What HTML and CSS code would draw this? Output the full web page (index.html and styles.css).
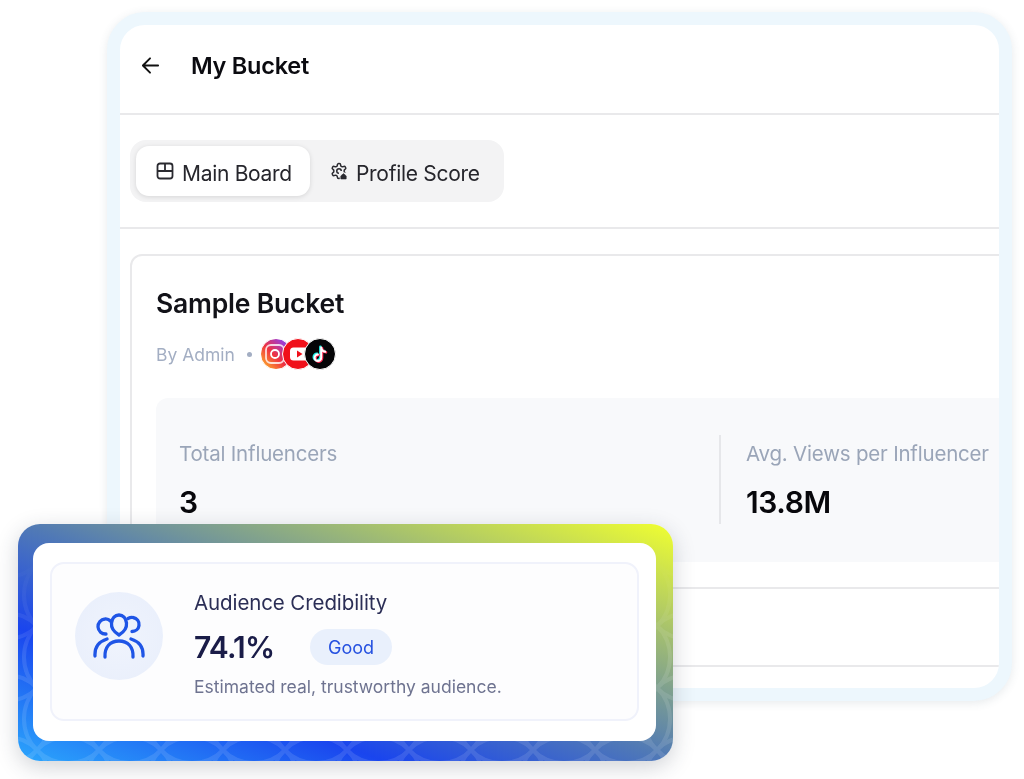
FILE: index.html
```html
<!DOCTYPE html>
<html>

<head>
    <title>My Bucket</title>
    <link rel="stylesheet" href="styles.css">
</head>

<body>
    <div class="page">
        <div class="frame">
            <div class="topbar">
                <svg class="back-icon" viewBox="0 0 20 20" fill="none" stroke="#111" stroke-width="2" stroke-linecap="round" stroke-linejoin="round">
                    <path d="M18 10H2.500M9.500 2.500 2 10l7.500 7.500" />
                </svg>
                <h1 class="page-title">My Bucket</h1>
            </div>

            <div class="tabs-row">
                <div class="tabs">
                    <div class="tab tab-active">
                        <svg class="tab-icon" viewBox="0 0 18 18" fill="none" stroke="#2a2a30" stroke-width="1.800" stroke-linejoin="round">
                            <rect x="1.500" y="1.500" width="15" height="15" rx="2.500" />
                            <path d="M1.500 9h15M9 1.500V9" />
                        </svg>
                        <span class="tab-label">Main Board</span>
                    </div>
                    <div class="tab">
                        <svg class="tab-icon" viewBox="0 0 24 24" fill="none" stroke="#2a2a30" stroke-width="2" stroke-linejoin="round">
                            <path d="M12.220 2h-.44a2 2 0 0 0-2 2v.18a2 2 0 0 1-1 1.730l-.43.25a2 2 0 0 1-2 0l-.15-.08a2 2 0 0 0-2.730.73l-.22.38a2 2 0 0 0 .73 2.730l.15.1a2 2 0 0 1 1 1.720v.51a2 2 0 0 1-1 1.740l-.15.09a2 2 0 0 0-.73 2.730l.22.38a2 2 0 0 0 2.730.73l.15-.08a2 2 0 0 1 2 0l.43.25a2 2 0 0 1 1 1.730V20a2 2 0 0 0 2 2h.44a2 2 0 0 0 2-2v-.18a2 2 0 0 1 1-1.730l.43-.25a2 2 0 0 1 2 0l.15.08a2 2 0 0 0 2.730-.73l.22-.39a2 2 0 0 0-.73-2.730l-.15-.08a2 2 0 0 1-1-1.740v-.5a2 2 0 0 1 1-1.740l.15-.09a2 2 0 0 0 .73-2.730l-.22-.38a2 2 0 0 0-2.730-.73l-.15.08a2 2 0 0 1-2 0l-.43-.25a2 2 0 0 1-1-1.730V4a2 2 0 0 0-2-2z" />
                            <path d="M15 12a3 3 0 1 0-3 3" />
                            <path d="M13 14h11v10H13z" fill="#f3f3f4" stroke="none" />
                            <path d="M14.500 18.500 18 15.500l3.500 3v4h-7z" fill="#2a2a30" stroke-width="1" />
                        </svg>
                        <span class="tab-label">Profile Score</span>
                    </div>
                </div>
            </div>

            <div class="card">
                <h2 class="card-title">Sample Bucket</h2>
                <div class="card-meta">
                    <span>By Admin</span>
                    <span class="meta-dot"></span>
                    <div class="socials">
                        <span class="social social-ig">
                            <svg viewBox="0 0 30 30" fill="none" stroke="#fff" stroke-width="1.800">
                                <rect x="5" y="6" width="18" height="18" rx="5" opacity="0.8" />
                                <circle cx="14" cy="15" r="4" />
                            </svg>
                        </span>
                        <span class="social social-yt">
                            <svg viewBox="0 0 30 30">
                                <rect x="7" y="8.500" width="22" height="13" rx="3.500" fill="#fff" />
                                <path d="M14 11.500v7l5.500-3.500z" fill="#f0101a" />
                            </svg>
                        </span>
                        <span class="social social-tt">
                            <svg viewBox="0 0 30 30" fill="none" stroke-width="2.600" stroke-linecap="round">
                                <path d="M16.200 8.500v10.200a3.300 3.300 0 1 1-3.300-3.300M16.200 8.800c.4 2.400 1.900 3.700 4 3.900" stroke="#25f4ee" transform="translate(-.8 -.6)" />
                                <path d="M16.200 8.500v10.200a3.300 3.300 0 1 1-3.300-3.300M16.200 8.800c.4 2.400 1.900 3.700 4 3.900" stroke="#fe2c55" transform="translate(.8 .6)" />
                                <path d="M16.200 8.500v10.200a3.300 3.300 0 1 1-3.300-3.300M16.200 8.800c.4 2.400 1.900 3.700 4 3.900" stroke="#fff" stroke-width="2" />
                            </svg>
                        </span>
                    </div>
                </div>

                <div class="stats">
                    <div class="stat stat-first">
                        <div class="stat-label">Total Influencers</div>
                        <div class="stat-value">3</div>
                    </div>
                    <div class="stat stat-second">
                        <div class="stat-label">Avg. Views per Influencer</div>
                        <div class="stat-value">13.8M</div>
                    </div>
                </div>

                <div class="card-row"></div>
                <div class="card-row card-row-short"></div>
            </div>
        </div>

        <div class="credibility">
            <svg class="pattern" width="100%" height="100%">
                <defs>
                    <pattern id="lattice" width="62" height="62" patternUnits="userSpaceOnUse" x="-12" y="9">
                        <g fill="none" stroke="#fff" stroke-width="4">
                            <circle cx="0" cy="0" r="44" />
                            <circle cx="62" cy="0" r="44" />
                            <circle cx="0" cy="62" r="44" />
                            <circle cx="62" cy="62" r="44" />
                        </g>
                    </pattern>
                </defs>
                <rect width="100%" height="100%" fill="url(#lattice)" />
            </svg>
            <div class="cred-inner">
                <div class="cred-box">
                    <div class="cred-circle">
                        <svg class="people-icon" viewBox="0 0 52 46" fill="none" stroke="#1f55e6" stroke-width="3.300" stroke-linecap="round" stroke-linejoin="round">
                            <path d="M13 21a7.500 7.500 0 0 1-1-15c2-.2 4 .5 5.500 2" />
                            <path d="M35 5.500c1.800-1 3.500-1.300 5-1 4 .7 6.500 4 6 8-.4 3.600-3.500 6-7 6" />
                            <path d="M26 22c-5-3-8-7-7.500-12C19 5 22 2 26 2s7 3 7.500 8c.5 5-2.500 9-7.500 12z" />
                            <path d="M2 43c-.5-8 2.500-14 12-17" />
                            <path d="M50 43c.5-8-2.500-14-12-17" />
                            <path d="M12 44c-.5-10 5-16 14-16s14.500 6 14 16" />
                        </svg>
                    </div>
                    <div class="cred-text">
                        <div class="cred-title">Audience Credibility</div>
                        <div class="cred-score">
                            <span class="cred-value">74.1%</span>
                            <span class="cred-pill">Good</span>
                        </div>
                        <div class="cred-note">Estimated real, trustworthy audience.</div>
                    </div>
                </div>
            </div>
        </div>
    </div>
</body>

</html>
```

FILE: styles.css
```css
* {
    box-sizing: border-box;
}

body {
    margin: 0;
    overflow: hidden;
    background: #fff;
    font-family: "Inter", "Liberation Sans", sans-serif;
}

.page {
    position: relative;
    width: 1024px;
    height: 779px;
    padding: 12px 12px 0 107px;
    filter: blur(0.4px);
}

.frame {
    height: 689px;
    border: 13px solid #edf7fd;
    border-radius: 38px;
    background: #fff;
    overflow: hidden;
    box-shadow: 0 2px 10px rgba(60, 80, 100, 0.12);
}

.topbar {
    display: flex;
    align-items: center;
    height: 90px;
    padding: 0 0 8px 21px;
    border-bottom: 2px solid #e9e9eb;
}

.back-icon {
    width: 19px;
    height: 19px;
}

.page-title {
    margin: 0 0 0 31px;
    font-size: 23.500px;
    font-weight: 600;
    letter-spacing: -0.25px;
    color: #0b0b10;
}

.tabs-row {
    height: 114px;
    padding: 25px 0 0 10px;
    border-bottom: 2px solid #e9e9eb;
}

.tabs {
    display: inline-flex;
    width: 374px;
    height: 62px;
    padding: 6px;
    border-radius: 16px;
    background: #f3f3f4;
}

.tab {
    display: flex;
    align-items: center;
    flex: none;
    gap: 8px;
    height: 50px;
    padding: 0 20px;
    font-size: 21px;
    white-space: nowrap;
    color: #26262c;
    letter-spacing: -0.3px;
}

.tab-label {
    margin-top: 4px;
}

.tab-active {
    width: 174px;
    border-radius: 13px;
    background: #fff;
    box-shadow: 0 1px 5px rgba(0, 0, 0, 0.12);
}

.tab-icon {
    width: 18px;
    height: 18px;
    flex: none;
}

.card {
    margin: 25px -40px 0 10px;
    padding: 30px 0 60px 24px;
    border: 2px solid #e9e9eb;
    border-radius: 12px;
}

.card-title {
    margin: -1px 0 1px;
    font-size: 26.500px;
    line-height: 36px;
    font-weight: 600;
    letter-spacing: -0.2px;
    color: #121218;
}

.card-meta {
    display: flex;
    align-items: center;
    margin-top: 17px;
    height: 32px;
    font-size: 17.500px;
    color: #a3aec3;
}

.meta-dot {
    width: 5px;
    height: 5px;
    margin: 0 8px 0 12px;
    border-radius: 50%;
    background: #a3aec3;
}

.socials {
    display: flex;
}

.social {
    width: 32px;
    height: 32px;
    border-radius: 50%;
    border: 1px solid #fff;
    overflow: hidden;
}

.social + .social {
    margin-left: -10px;
}

.social svg {
    display: block;
    width: 100%;
    height: 100%;
}

.social-ig {
    background: linear-gradient(45deg, #fdb32a 5%, #f0333f 45%, #a03ccf 80%, #6b4fd8);
}

.social-yt {
    background: #f0101a;
}

.social-tt {
    background: #050507;
}

.stats {
    display: flex;
    height: 164px;
    margin-top: 28px;
    padding: 37px 0 0 23px;
    border-radius: 12px 0 0 12px;
    background: #f8f9fb;
}

.stat-first {
    width: 542px;
    height: 89px;
    border-right: 2px solid #e6e7ea;
}

.stat-second {
    padding-left: 25px;
}

.stat-label {
    padding-top: 1px;
    font-size: 20.500px;
    letter-spacing: -0.2px;
    line-height: 36px;
    color: #9aa5b8;
}

.stat-value {
    margin-top: 12px;
    font-size: 30px;
    line-height: 36px;
    font-weight: 600;
    letter-spacing: -0.4px;
    color: #08080c;
}

.card-row {
    height: 27px;
    border-bottom: 2px solid #e9e9eb;
    margin-left: -24px;
}

.card-row-short {
    height: 78px;
}

/* floating credibility card */
.credibility {
    position: absolute;
    top: 524px;
    left: 18px;
    width: 655px;
    height: 237px;
    padding: 19px 17px 20px 15px;
    border-radius: 22px;
    overflow: hidden;
    background: linear-gradient(to top right, #2ba6fc 0%, #1a45ee 28%, #5079b6 50%, #f0ff30 100%);
    box-shadow: 0 6px 22px rgba(40, 50, 70, 0.22);
}

.pattern {
    position: absolute;
    top: 0;
    left: 0;
    opacity: 0.11;
    -webkit-mask-image: linear-gradient(to bottom, transparent 12%, #000 55%);
    mask-image: linear-gradient(to bottom, transparent 12%, #000 55%);
}

.cred-inner {
    position: relative;
    height: 100%;
    padding: 19px 17px 20px 17px;
    border-radius: 16px;
    background: #fff;
}

.cred-box {
    display: flex;
    align-items: flex-start;
    height: 100%;
    padding: 25px 0 0 23px;
    border: 2px solid #f0f2fb;
    border-radius: 14px;
    background: #fdfdfe;
}

.cred-circle {
    display: flex;
    align-items: center;
    justify-content: center;
    width: 88px;
    height: 88px;
    margin-top: 3px;
    flex: none;
    border-radius: 50%;
    background: radial-gradient(circle, #f0f4fd, #e8eefb);
}

.people-icon {
    width: 52px;
    height: 46px;
}

.cred-text {
    margin-left: 31px;
}

.cred-title {
    font-size: 20.500px;
    line-height: 28px;
    letter-spacing: -0.1px;
    color: #2b2e56;
}

.cred-score {
    display: flex;
    align-items: center;
    margin-top: 12px;
    height: 36px;
}

.cred-value {
    width: 116px;
    font-size: 30px;
    font-weight: 600;
    letter-spacing: -0.8px;
    color: #1a1c48;
}

.cred-pill {
    display: flex;
    align-items: center;
    justify-content: center;
    width: 82px;
    height: 36px;
    border-radius: 18px;
    background: #e9f0fc;
    font-size: 18px;
    color: #2450e0;
}

.cred-note {
    margin-top: 10px;
    font-size: 17.500px;
    line-height: 24px;
    color: #6e7390;
}
```
